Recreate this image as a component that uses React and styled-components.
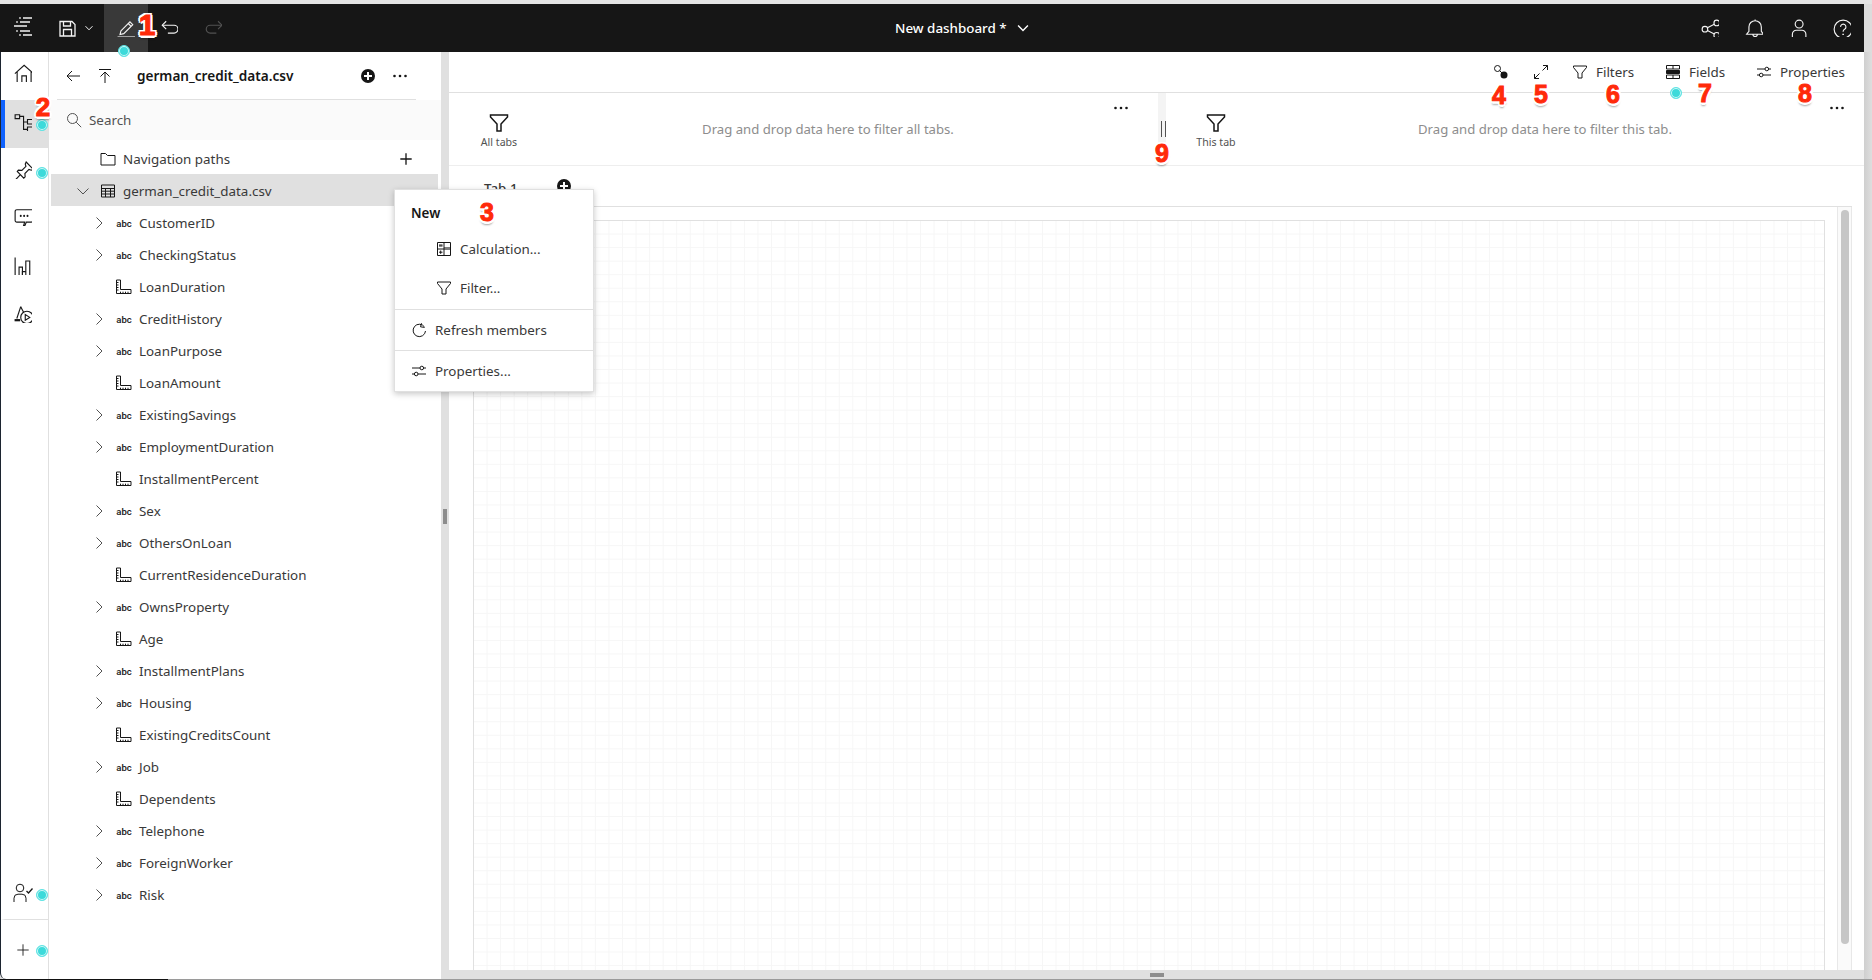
import React from "react";
import styled, { createGlobalStyle } from "styled-components";

const Global = createGlobalStyle`
  html, body { margin: 0; padding: 0; background: #d8d8d8; overflow: hidden; }
  * { box-sizing: border-box; }
  #root { width: 1872px; height: 980px; }
`;
const FONT = `"Noto Sans", "Open Sans", Roboto, sans-serif`;

const Page = styled.div`
  position: relative; width: 1872px; height: 980px; overflow: hidden;
  display: flex; flex-direction: column; background: #dcdcdc;
  font-family: ${FONT}; font-size: 13.4px; color: #393939;
`;
const TopStrip = styled.div`height: 4px; background: #e4e4e4; flex: none;`;
const TopBar = styled.header`
  position: relative; height: 48px; flex: none; margin-right: 8px; background: #161616; color: #f4f4f4;
  display: flex; align-items: center;
`;
const TopLeft = styled.div`display: flex; align-items: center; height: 100%; width: 895px; flex: none;`;
const TopRight = styled.div`display: flex; align-items: center; justify-content: flex-end; height: 100%; flex: 1;`;
const TopIcon = styled.div`
  width: ${p => p.$w || 44}px; height: 48px; flex: none; display: flex; align-items: center; justify-content: center;
  margin-left: ${p => p.$ml || 0}px; padding-bottom: ${p => p.$pb || 0}px;
  background: ${p => p.$active ? "#393939" : "transparent"}; color: ${p => p.$off ? "#525252" : "#f4f4f4"};
`;
const Title = styled.div`
  display: flex; align-items: center; gap: 9px; font-size: 13.4px; font-weight: 500; color: #fff; padding-bottom: 1px;
`;
const Body = styled.div`flex: 1; min-height: 0; display: flex;`;
const BottomEdge = styled.div`height: 1px; flex: none; background: linear-gradient(90deg, #111 168px, #9a9a9a 168px);`;
const Rail = styled.nav`
  width: 49px; flex: none; display: flex; flex-direction: column; background: #fff;
  border-left: 1px solid #1c2430; border-right: 1px solid #e0e0e0; border-bottom-left-radius: 6px;
`;
const RailItem = styled.div`
  height: ${p => p.$h || 48}px; flex: none; display: flex; align-items: center; justify-content: center;
  padding: 0 ${p => p.$pr ?? 7}px ${p => p.$pb ?? 5}px 0; color: #161616;
  background: ${p => p.$active ? "#e0e0e0" : "transparent"};
  border-left: 4px solid ${p => p.$active ? "#0f62fe" : "transparent"};
  border-top: ${p => p.$line ? "1px solid #e0e0e0" : "0"};
`;
const RailSpacer = styled.div`flex: 1;`;
const TreePanel = styled.aside`width: 392px; flex: none; background: #fff; display: flex; flex-direction: column;`;
const TreeHead = styled.div`
  height: 48px; flex: none; margin: 0 25px 0 8px; border-bottom: 1px solid #e0e0e0; display: flex; align-items: center;
  color: #161616;
`;
const HeadBtn = styled.div`width: ${p => p.$w}px; display: flex; justify-content: center; flex: none; color: #161616;`;
const HeadTitle = styled.div`font-weight: 600; font-size: 13.6px; flex: 1; padding-left: 16px; color: #161616;`;
const SearchRow = styled.div`
  height: 40px; flex: none; background: #fafafa; display: flex; align-items: center; gap: 7px;
  padding-left: 17px; color: #525252;
`;
const Rows = styled.div`padding: 2px 3px 0 2px;`;
const Row = styled.div`
  height: 32px; display: flex; align-items: center; padding: 2px 0 0 ${p => 24 + 16 * p.$level}px;
  background: ${p => p.$selected ? "#e0e0e0" : "transparent"}; position: relative;
`;
const Chevron = styled.div`width: 16px; height: 16px; margin-right: 9px; flex: none; color: #525252; display: flex; align-items: center; justify-content: center;`;
const RowIcon = styled.div`width: 16px; height: 16px; flex: none; margin-right: 7px; display: flex; align-items: center; justify-content: center; color: #161616;`;
const Abc = styled.span`font: 500 9.5px Roboto, sans-serif; color: #161616;`;
const RowAction = styled.div`margin-left: auto; margin-right: 25px; color: #161616; display: flex;`;
const Splitter = styled.div`
  width: 8px; flex: none; background: #e0e0e0; position: relative;
  &::after { content: ""; position: absolute; left: 2px; top: 457px; width: 4px; height: 15px; background: #8d8d8d; }
`;
const Main = styled.main`flex: 1; min-width: 0; background: #fff; display: flex; flex-direction: column;`;
const Gutter = styled.div`width: 8px; flex: none; background: linear-gradient(90deg,#cfcfcf,#dedede);`;
const Toolbar = styled.div`
  height: 41px; flex: none; display: flex; justify-content: flex-end; align-items: center; padding: 0 19px 1px 0;
  border-bottom: 1px solid #e0e0e0;
`;
const ToolBtn = styled.div`width: ${p => p.$w}px; flex: none; display: flex; align-items: center; gap: 8px; color: #393939; & svg { color: #161616; }`;
const FilterRow = styled.div`height: 73px; flex: none; display: flex; border-bottom: 1px solid #eeeeee;`;
const FilterZone = styled.div`flex: ${p => p.$grow} 0 ${p => p.$basis}px; display: flex; min-width: 0;`;
const FilterLabel = styled.div`
  width: 100px; flex: none; display: flex; flex-direction: column; align-items: center; padding-top: 20px; gap: 2px;
  font-size: 10.6px; color: #161616;
  & span { color: #525252; line-height: 14px; }
`;
const FilterHint = styled.div`flex: 1; display: flex; justify-content: center; padding-top: 26px; color: #8d8d8d; font-size: 13.15px; line-height: 20px;`;
const MoreSlot = styled.div`width: ${p => p.$w}px; flex: none; padding: 7px 0 0 ${p => p.$pad}px; color: #161616;`;
const ZoneSplit = styled.div`
  width: 8px; flex: none; background: #f4f4f4; position: relative;
  &::after { content: ""; position: absolute; left: 3px; top: 28px; width: 3px; height: 16px; border-left: 1px solid #525252; border-right: 1px solid #525252; }
`;
const TabRow = styled.div`height: 41px; flex: none; display: flex; align-items: center; padding-left: 35px; gap: 38px; border-bottom: 1px solid #e0e0e0; margin-right: 12px;`;
const TabName = styled.div`font-weight: 500; color: #393939; padding-top: 4px;`;
const CanvasArea = styled.div`flex: 1; min-height: 0; display: flex; padding: 13px 0 0 24px; margin-right: 12px; border-right: 1px solid #e8e8e8;`;
const Canvas = styled.div`
  flex: 1; border: 1px solid #e0e0e0; border-bottom: 0;
  background-color: #fff;
  background-image: linear-gradient(#f6f6f6 1px, transparent 1px), linear-gradient(90deg, #f6f6f6 1px, transparent 1px);
  background-size: 13.55px 13.55px; background-position: -1px -1px;
`;
const ScrollTrack = styled.div`width: 14px; flex: none; margin: -13px 0 0 12px; background: #fafafa; border-left: 1px solid #e8e8e8; padding: 3px 0 0 3px;`;
const ScrollThumb = styled.div`width: 8px; height: 734px; background: #c6c6c6; border-radius: 4px;`;
const BottomBar = styled.div`
  height: 9px; flex: none; background: #e0e0e0; display: flex; justify-content: center; align-items: center;
  &::after { content: ""; width: 14px; height: 4px; background: #8d8d8d; }
`;
const Menu = styled.div`
  position: absolute; left: 394px; top: 189px; width: 200px; height: 203px; background: #fff; border: 1px solid #e0e0e0;
  box-shadow: 0 2px 6px rgba(0,0,0,.22); display: flex; flex-direction: column; z-index: 5; color: #393939;
`;
const MenuHead = styled.div`height: 40px; padding: 6px 0 0 16px; display: flex; align-items: center; font-weight: 600; color: #161616;`;
const MenuItem = styled.div`
  height: ${p => p.$h || 40}px; flex: none; display: flex; align-items: center; gap: 8px; padding-left: ${p => p.$indent ? 41 : 16}px;
  border-bottom: ${p => p.$line ? "1px solid #e0e0e0" : "0"}; & svg { color: #161616; }
`;
const Dot = styled.div`
  position: absolute; left: ${p => p.$x - 6}px; top: ${p => p.$y - 6}px; width: 12px; height: 12px; border-radius: 50%;
  background: #3ddada; border: 1px solid #62e4e4; box-shadow: inset 0 0 0 1px #d4f8f8; z-index: 8;
`;
const Mark = styled.div`
  position: absolute; left: ${p => p.$x - 15}px; top: ${p => p.$y - 16}px; width: 30px; height: 32px; text-align: center;
  font: 700 ${p => p.$s || 25}px/32px "Liberation Sans", sans-serif; color: #ff2a0a; z-index: 9;
  -webkit-text-stroke: 1px #ff2a0a;
  text-shadow: -2.5px 0 #fff, 2.5px 0 #fff, 0 -2.5px #fff, 0 2.5px #fff, -2px -2px #fff, 2px -2px #fff, -2px 2px #fff, 2px 2px #fff, 0 4px 2px rgba(0,0,0,.35);
`;

const Svg = ({ s = 16, children, sw = 1, v = 16 }) => (
  <svg width={s} height={s} viewBox={`0 0 ${v} ${v}`} fill="none" stroke="currentColor" strokeWidth={sw} style={{ flex: "none", display: "block" }}>{children}</svg>
);
const I = {
  Logo: () => <Svg s={20} v={20} sw={1.5}><path d="M10 2h9M6.2 2h1.6M7 6h10M3.2 6h1.6M1 10h13M7 15h10M3.2 15h1.6M10 19h9M6.2 19h1.6" /></Svg>,
  Save: () => <Svg s={17} v={17} sw={1.3}><path d="M1 1.5h12l3 3V16H1z" /><path d="M4.5 1.5v4.5h7V1.5M4.5 16V9.5h8V16" /></Svg>,
  ChevD: ({ s = 10 }) => <Svg s={s} v={10} sw={1}><path d="M1.5 3.2 5 6.8 8.5 3.2" /></Svg>,
  Pencil: () => <Svg s={18}><path d="M3.5 10.5 11.5 2.5l2.5 2.5-8 8-3.3.8zM10 4l2.5 2.5" /><path d="M0.5 16h17" /></Svg>,
  Undo: () => <Svg s={18}><path d="M2 5.5h10.5a3.5 3.5 0 0 1 0 7H7" /><path d="M5.5 2 2 5.5 5.5 9" /></Svg>,
  Redo: () => <Svg s={18}><path d="M16 5.5H5.5a3.5 3.5 0 0 0 0 7H11" /><path d="M12.5 2 16 5.5 12.5 9" /></Svg>,
  Share: () => <Svg s={18}><circle cx="3.5" cy="9" r="2.5" /><circle cx="14" cy="3.5" r="2.5" /><circle cx="14" cy="14.5" r="2.5" /><path d="M5.7 7.8 11.8 4.7M5.7 10.2l6.1 3.1" /></Svg>,
  Bell: () => <Svg s={18}><path d="M1.5 13.5 3.5 11V7a5.5 5.5 0 0 1 11 0v4l2 2.5zM7 13.5a2 2 0 0 0 4 0M9 .5v1" /></Svg>,
  User: () => <Svg s={18}><circle cx="9" cy="4.5" r="3.5" /><path d="M3 17v-3.5A3.5 3.5 0 0 1 6.5 10h5a3.5 3.5 0 0 1 3.5 3.5V17" /></Svg>,
  Help: () => <Svg s={18}><circle cx="9" cy="9" r="8" /><path d="M6.7 7a2.4 2.4 0 1 1 3.6 2.1c-.9.5-1.3 1-1.3 2v.3" /><path d="M9 13v1.2" strokeWidth="1.4" /></Svg>,
  Home: () => <Svg s={18}><path d="M.8 8.5 9 1.2l8.2 7.3M2.8 7v9.5h12.4V7" /><path d="M7 16.5V10.5h4v6" /></Svg>,
  Tree: () => <Svg s={18}><path d="M1 1.5h4v3.5H1zM5 3h3.5v11.5H12M8.5 8H12M12 5.8h4.5v4H12zM12 12.4h4.5v4H12z" /></Svg>,
  Pin: () => <Svg s={18}><path d="M10.8.9 17 7.2l-1.6 1-2.1-.7-3.6 3.6.2 3-1.2 1.1-5.8-5.9 1-1.2 3.1.2 3.6-3.6-.6-2.1zM5.5 12.4 1 17" /></Svg>,
  Chat: () => <Svg s={18}><path d="M2.5 1.5h13a1.5 1.5 0 0 1 1.5 1.5v8a1.5 1.5 0 0 1-1.5 1.5H11l-1.5 3.5-1-.4 1-3.1H2.5A1.5 1.5 0 0 1 1 11V3a1.5 1.5 0 0 1 1.5-1.5z" /><circle cx="6" cy="7" r=".9" fill="currentColor" stroke="none" /><circle cx="9" cy="7" r=".9" fill="currentColor" stroke="none" /><circle cx="12" cy="7" r=".9" fill="currentColor" stroke="none" /></Svg>,
  Chart: () => <Svg s={18}><path d="M1 .5v16.5h16.5" /><path d="M4.5 17V9h3v8M10.5 17V3.5h3.5V17" /><path d="M7.5 17v-4h3" /></Svg>,
  Shapes: () => <Svg s={18}><path d="M6 1.5 2.5 12" /><path d="M6 1.5 8.5 6.5" /><circle cx="11.5" cy="11" r="5.5" /><path d="M10 8.5v5l4-2.5z" /><path d="M.5 13.5h5" strokeWidth="2" /></Svg>,
  PersonCheck: () => <Svg s={20} v={20}><circle cx="7" cy="5" r="3.8" /><path d="M1 19v-3.8A4 4 0 0 1 5 11.2h4a4 4 0 0 1 4 4V19" /><path d="M13.5 8 15.5 10 19.5 5.5" strokeWidth="1.3" /></Svg>,
  Plus: ({ s = 16, sw = 1 }) => <Svg s={s} sw={sw}><path d="M8 1.5v13M1.5 8h13" /></Svg>,
  Back: () => <Svg><path d="M15 8H2M7 3 2 8l5 5" /></Svg>,
  Upload: () => <Svg><path d="M2 1.5h12M8 15V4M3.5 8.5 8 4l4.5 4.5" /></Svg>,
  AddCircle: () => <svg width="16" height="16" viewBox="0 0 16 16" style={{ display: "block", flex: "none" }}><circle cx="8" cy="8" r="7" fill="#161616" /><path d="M8 4v8M4 8h8" stroke="#fff" strokeWidth="2" /></svg>,
  More: () => <svg width="16" height="16" viewBox="0 0 16 16" fill="currentColor" style={{ display: "block" }}><circle cx="2.5" cy="8" r="1.3" /><circle cx="8" cy="8" r="1.3" /><circle cx="13.5" cy="8" r="1.3" /></svg>,
  Search: () => <Svg><circle cx="6.5" cy="6.5" r="5" /><path d="m10.2 10.2 5 5" /></Svg>,
  Folder: () => <Svg><path d="M1 2.5h4.5l2 2H15v9.5H1z" /></Svg>,
  Table: () => <Svg><path d="M1.5 2h13v12h-13zM1.5 5.5h13M1.5 8.2h13M1.5 11h13M5.5 5.5V14M10.5 5.5V14" /></Svg>,
  ChevR: () => <Svg s={14} v={14}><path d="M4.5 1.5 10 7l-5.5 5.5" /></Svg>,
  ChevDown: () => <Svg s={14} v={14}><path d="M1.5 4.5 7 10l5.5-5.5" /></Svg>,
  Measure: () => <Svg><path d="M.5 1h4v9.5h10.5v4H.5z" /><path d="M.5 3.5H2.5M.5 6H2.5M.5 8.5H2.5M.5 11H2.5M7 14.5v-1.8M9.5 14.5v-1.8M12 14.5v-1.8M4.5 12.7v1.8" /></Svg>,
  Filter: ({ s = 16 }) => <Svg s={s}><path d="M1.5 2h13v1.5L10 9v5H6V9L1.5 3.5z" /></Svg>,
  FilterLg: () => <Svg s={20} v={20} sw={1.5}><path d="M1.5 2h17v2L12 11v7H8v-7L1.5 4z" /></Svg>,
  Expand: () => <Svg><path d="M10 1.5h4.5V6M14.5 1.5 9.5 6.5M6 14.5H1.5V10M1.5 14.5l5-5" /></Svg>,
  Link: () => <svg width="16" height="16" viewBox="0 0 16 16" style={{ display: "block" }}><circle cx="4.5" cy="4.5" r="3" fill="none" stroke="#161616" /><circle cx="11" cy="11" r="3.5" fill="#161616" /><path d="M6.7 6.7 9 9" stroke="#161616" /></svg>,
  Fields: () => <Svg><path d="M1.5 1.5h13v3.5h-13zM1.5 11h13v3.5h-13zM8 11v3.5M8 1.5V5" /><path d="M1.5 6.5h13v3h-13z" fill="currentColor" /></Svg>,
  Sliders: () => <Svg><path d="M1 5h8M12.5 5H15M1 11h2.5M7 11h8" /><circle cx="10.8" cy="5" r="1.8" /><circle cx="5.2" cy="11" r="1.8" /></Svg>,
  Calc: () => <Svg><path d="M1.5 1.5h13v13h-13zM8 1.5v13M1.5 8h6.5" /><path d="M3 5h3.5M3 4h3.5M3 11.2h3.5M4.7 9.5v3.4" /><path d="M8 6h6.5v3H8z" fill="currentColor" stroke="none" opacity=".55" /></Svg>,
  Refresh: () => <Svg><path d="M13.5 5A6.2 6.2 0 1 0 14.5 9" /><path d="M10.5 1.2 9.5 4.8l4 .6" /></Svg>,
};

const fields = [
  ["CustomerID", 1], ["CheckingStatus", 1], ["LoanDuration", 0], ["CreditHistory", 1], ["LoanPurpose", 1], ["LoanAmount", 0],
  ["ExistingSavings", 1], ["EmploymentDuration", 1], ["InstallmentPercent", 0], ["Sex", 1], ["OthersOnLoan", 1],
  ["CurrentResidenceDuration", 0], ["OwnsProperty", 1], ["Age", 0], ["InstallmentPlans", 1], ["Housing", 1],
  ["ExistingCreditsCount", 0], ["Job", 1], ["Dependents", 0], ["Telephone", 1], ["ForeignWorker", 1], ["Risk", 1],
];
const dots = [[124, 51], [42, 125], [42, 173], [42, 895], [42, 951], [1676, 93]];
const marks = [["1", 147, 25, 30], ["2", 43, 107, 26], ["3", 487, 212], ["4", 1499, 95], ["5", 1541, 94], ["6", 1613, 94], ["7", 1705, 93], ["8", 1805, 93], ["9", 1162, 153]];

export default function App() {
  return (
    <Page>
      <Global />
      <TopStrip />
      <TopBar>
        <TopLeft>
          <TopIcon $w={46} $pb={5}><I.Logo /></TopIcon>
          <TopIcon $w={22} $ml={10}><I.Save /></TopIcon>
          <TopIcon $w={14} $ml={4}><I.ChevD /></TopIcon>
          <TopIcon $w={44} $ml={8} $active><I.Pencil /></TopIcon>
          <TopIcon $w={44} $ml={-1}><I.Undo /></TopIcon>
          <TopIcon $w={44} $off><I.Redo /></TopIcon>
        </TopLeft>
        <Title>New dashboard *<I.ChevD s={14} /></Title>
        <TopRight>
          <TopIcon><I.Share /></TopIcon>
          <TopIcon><I.Bell /></TopIcon>
          <TopIcon><I.User /></TopIcon>
          <TopIcon><I.Help /></TopIcon>
        </TopRight>
      </TopBar>
      <Body>
        <Rail>
          <RailItem $pb={6} $pr={8}><I.Home /></RailItem>
          <RailItem $active><I.Tree /></RailItem>
          <RailItem><I.Pin /></RailItem>
          <RailItem $pb={7}><I.Chat /></RailItem>
          <RailItem><I.Chart /></RailItem>
          <RailItem><I.Shapes /></RailItem>
          <RailSpacer />
          <RailItem $h={49} $pb={3}><I.PersonCheck /></RailItem>
          <RailItem $h={60} $line $pb={0}><I.Plus s={14} /></RailItem>
        </Rail>
        <TreePanel>
          <TreeHead>
            <HeadBtn $w={32}><I.Back /></HeadBtn>
            <HeadBtn $w={32}><I.Upload /></HeadBtn>
            <HeadTitle>german_credit_data.csv</HeadTitle>
            <HeadBtn $w={32}><I.AddCircle /></HeadBtn>
            <HeadBtn $w={32}><I.More /></HeadBtn>
          </TreeHead>
          <SearchRow><I.Search />Search</SearchRow>
          <Rows>
            <Row $level={0}>
              <Chevron />
              <RowIcon><I.Folder /></RowIcon>
              Navigation paths
              <RowAction><I.Plus s={14} sw={1.5} /></RowAction>
            </Row>
            <Row $level={0} $selected>
              <Chevron><I.ChevDown /></Chevron>
              <RowIcon><I.Table /></RowIcon>
              german_credit_data.csv
            </Row>
            {fields.map(([name, text]) => (
              <Row $level={1} key={name}>
                <Chevron>{text ? <I.ChevR /> : null}</Chevron>
                <RowIcon>{text ? <Abc>abc</Abc> : <I.Measure />}</RowIcon>
                {name}
              </Row>
            ))}
          </Rows>
        </TreePanel>
        <Splitter />
        <Main>
          <Toolbar>
            <ToolBtn $w={40}><I.Link /></ToolBtn>
            <ToolBtn $w={39}><I.Expand /></ToolBtn>
            <ToolBtn $w={93}><I.Filter />Filters</ToolBtn>
            <ToolBtn $w={91}><I.Fields />Fields</ToolBtn>
            <ToolBtn $w={89}><I.Sliders />Properties</ToolBtn>
          </Toolbar>
          <FilterRow>
            <FilterZone $grow={0} $basis={709}>
              <FilterLabel><I.FilterLg /><span>All tabs</span></FilterLabel>
              <FilterHint>Drag and drop data here to filter all tabs.</FilterHint>
              <MoreSlot $w={51} $pad={6}><I.More /></MoreSlot>
            </FilterZone>
            <ZoneSplit />
            <FilterZone $grow={1} $basis={0}>
              <FilterLabel><I.FilterLg /><span>This tab</span></FilterLabel>
              <FilterHint>Drag and drop data here to filter this tab.</FilterHint>
              <MoreSlot $w={40} $pad={5}><I.More /></MoreSlot>
            </FilterZone>
          </FilterRow>
          <TabRow>
            <TabName>Tab 1</TabName>
            <I.AddCircle />
          </TabRow>
          <CanvasArea>
            <Canvas />
            <ScrollTrack><ScrollThumb /></ScrollTrack>
          </CanvasArea>
          <BottomBar />
        </Main>
        <Gutter />
      </Body>
      <BottomEdge />
      <Menu>
        <MenuHead>New</MenuHead>
        <MenuItem $indent $h={37}><I.Calc />Calculation...</MenuItem>
        <MenuItem $indent $h={43} $line><I.Filter />Filter...</MenuItem>
        <MenuItem $h={41} $line><I.Refresh />Refresh members</MenuItem>
        <MenuItem $h={40}><I.Sliders />Properties...</MenuItem>
      </Menu>
      {dots.map(([x, y]) => <Dot key={x + "-" + y} $x={x} $y={y} />)}
      {marks.map(([t, x, y, s]) => <Mark key={t} $x={x} $y={y} $s={s}>{t}</Mark>)}
    </Page>
  );
}
